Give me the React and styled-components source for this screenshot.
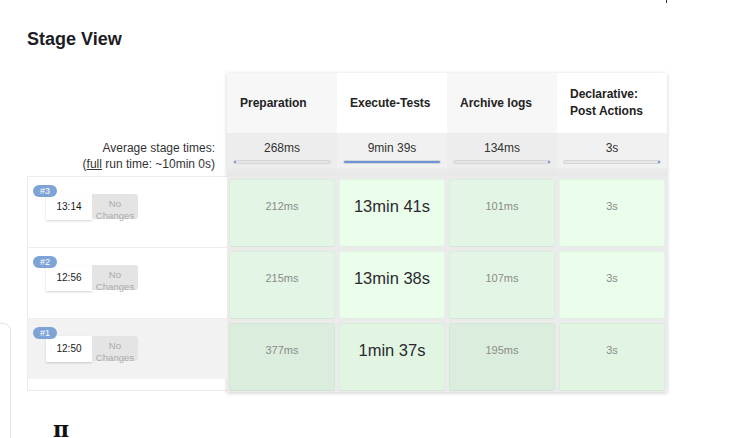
import styled, { createGlobalStyle } from "styled-components";

const GlobalStyle = createGlobalStyle`
  body {
    margin: 0;
    background: #fff;
    font-family: "Liberation Sans", Arial, sans-serif;
    color: #222;
  }
`;

const stages = [
  { name: "Preparation", avg: "268ms", fill: 2, end: "left" },
  { name: "Execute-Tests", avg: "9min 39s", fill: 100, end: "left" },
  { name: "Archive logs", avg: "134ms", fill: 2, end: "right" },
  { name: "Declarative: Post Actions", avg: "3s", fill: 2, end: "right" },
];

const builds = [
  { id: 3, time: "13:14", dim: false, cells: ["212ms", "13min 41s", "101ms", "3s"] },
  { id: 2, time: "12:56", dim: false, cells: ["215ms", "13min 38s", "107ms", "3s"] },
  { id: 1, time: "12:50", dim: true, cells: ["377ms", "1min 37s", "195ms", "3s"] },
];

const cellColor = (shade, dim) => {
  if (dim) return shade ? "#dbeedd" : "#e2f5e3";
  return shade ? "#e3f6e5" : "#ebfdeb";
};

const App = () => {
  return (
    <>
      <GlobalStyle />
      <Page>
        <Side>
          <SideBox />
        </Side>
        <Main>
          <TopTick />
          <Title>Stage View</Title>
          <Board>
            <Labels>
              <HeadSpacer />
              <AvgLabel>
                Average stage times:
                <br />
                (<u>full</u> run time: ~10min 0s)
              </AvgLabel>
              <Builds>
                {builds.map((b) => (
                  <BuildRow key={b.id} $dim={b.dim}>
                    <Badge>#{b.id}</Badge>
                    <TimeBox>{b.time}</TimeBox>
                    <Changes>
                      No
                      <br />
                      Changes
                    </Changes>
                  </BuildRow>
                ))}
              </Builds>
            </Labels>
            <StageTable>
              {stages.map((s, i) => (
                <HeadCell key={s.name} $shade={i % 2 === 0}>
                  {s.name}
                </HeadCell>
              ))}
              {stages.map((s, i) => (
                <AvgCell key={s.name} $shade={i % 2 === 0}>
                  <AvgValue>{s.avg}</AvgValue>
                  <Bar $end={s.end}>
                    <Fill style={{ width: s.fill === 100 ? "100%" : "2px" }} />
                  </Bar>
                </AvgCell>
              ))}
              {builds.map((b) =>
                b.cells.map((c, i) => (
                  <Slot key={b.id + "-" + i}>
                    <Cell $bg={cellColor(i % 2 === 0, b.dim)}>
                      <CellText $big={i === 1}>{c}</CellText>
                    </Cell>
                  </Slot>
                ))
              )}
            </StageTable>
          </Board>
          <Footer>π</Footer>
        </Main>
      </Page>
    </>
  );
};

export default App;

const Page = styled.div`
  display: flex;
  min-height: 438px;
  overflow: hidden;
`;

const Side = styled.aside`
  width: 12px;
  flex-shrink: 0;
`;

const SideBox = styled.div`
  margin-top: 323px;
  margin-left: -14px;
  width: 25px;
  height: 200px;
  border: 1px solid #e2e2e2;
  border-radius: 8px;
  box-sizing: border-box;
`;

const Main = styled.main`
  padding-left: 15px;
  position: relative;
`;

const TopTick = styled.div`
  position: absolute;
  top: 0;
  left: 654px;
  width: 1px;
  height: 3px;
  background: #333;
`;

const Title = styled.h2`
  margin: 28px 0 0;
  font-size: 18px;
  line-height: 22px;
  font-weight: 700;
  color: #1c1c24;
`;

const Board = styled.div`
  display: flex;
  margin-top: 23px;
`;

const Labels = styled.div`
  width: 200px;
  display: flex;
  flex-direction: column;
`;

const HeadSpacer = styled.div`
  height: 60px;
`;

const AvgLabel = styled.div`
  height: 43px;
  box-sizing: border-box;
  padding: 7px 12px 0 0;
  text-align: right;
  font-size: 12px;
  line-height: 16px;
  color: #333;
`;

const Builds = styled.div`
  border: 1px solid #ececec;
  border-right: none;
  padding-bottom: 11px;
  box-shadow: inset 0 1px 0 #e4e4e4;
`;

const BuildRow = styled.div`
  position: relative;
  display: flex;
  align-items: flex-start;
  height: ${(p) => (p.$dim ? "60px" : "71px")};
  box-sizing: border-box;
  padding: 17px 0 0 18px;
  background: ${(p) => (p.$dim ? "#f2f2f2" : "#fff")};
  border-bottom: ${(p) => (p.$dim ? "none" : "1px solid #ededed")};
`;

const Badge = styled.span`
  position: absolute;
  top: 8px;
  left: 5px;
  width: 24px;
  height: 12px;
  border-radius: 7px;
  background: #7ea4d7;
  color: #fff;
  font-size: 9px;
  line-height: 12px;
  text-align: center;
`;

const TimeBox = styled.div`
  width: 46px;
  height: 26px;
  background: #fff;
  box-shadow: 0 1px 2px rgba(0, 0, 0, 0.18);
  font-size: 10px;
  line-height: 26px;
  text-align: center;
  color: #1a1a1a;
`;

const Changes = styled.div`
  width: 46px;
  height: 25px;
  box-sizing: border-box;
  padding-top: 4px;
  background: #e4e4e4;
  border-radius: 0 3px 3px 0;
  color: #ababab;
  font-size: 9.6px;
  line-height: 12px;
  text-align: center;
`;

const StageTable = styled.div`
  display: grid;
  grid-template-columns: repeat(4, 110px);
  grid-template-rows: 60px 43px 72px 72px 72px;
  background: #ececec;
  box-shadow: 0 1px 4px rgba(0, 0, 0, 0.2);
`;

const HeadCell = styled.div`
  display: flex;
  align-items: center;
  padding: 0 13px;
  background: ${(p) => (p.$shade ? "#f7f7f7" : "#fff")};
  font-size: 12px;
  font-weight: 700;
  line-height: 17px;
  color: #222;
`;

const AvgCell = styled.div`
  position: relative;
  box-sizing: border-box;
  padding: 7px 6px 0;
  background: ${(p) => (p.$shade ? "#ededed" : "#f1f1f1")};
  text-align: center;

  &::after {
    content: "";
    position: absolute;
    left: 0;
    right: 0;
    bottom: 0;
    height: 8px;
    background: linear-gradient(#e9e9e9, #e2e2e2);
    opacity: 0.6;
  }
`;

const AvgValue = styled.div`
  font-size: 12px;
  line-height: 16px;
  color: #333;
`;

const Bar = styled.div`
  display: flex;
  justify-content: ${(p) => (p.$end === "right" ? "flex-end" : "flex-start")};
  margin-top: 4px;
  height: 4px;
  box-sizing: border-box;
  border: 1px solid #d6d6d6;
  border-radius: 2px;
  background: #e6e6e6;
  overflow: hidden;
`;

const Fill = styled.div`
  height: 100%;
  background: #6c95d8;
`;

const Slot = styled.div`
  padding: 3px 2px 1px;
  background: #ebebeb;
`;

const Cell = styled.div`
  height: 100%;
  box-sizing: border-box;
  display: flex;
  align-items: center;
  justify-content: center;
  padding-bottom: 14px;
  border-radius: 3px;
  background: ${(p) => p.$bg};
  border: 1px solid rgba(0, 0, 0, 0.03);
  border-bottom-color: rgba(0, 0, 0, 0.06);
`;

const CellText = styled.span`
  font-size: ${(p) => (p.$big ? "16.5px" : "11px")};
  line-height: ${(p) => (p.$big ? "20px" : "14px")};
  color: ${(p) => (p.$big ? "#2a2a30" : "#8a8a8a")};
`;

const Footer = styled.div`
  margin: 22px 0 0 26px;
  font-family: "DejaVu Serif", "Liberation Serif", serif;
  font-weight: 700;
  font-size: 22px;
  line-height: 30px;
  color: #111;
`;
